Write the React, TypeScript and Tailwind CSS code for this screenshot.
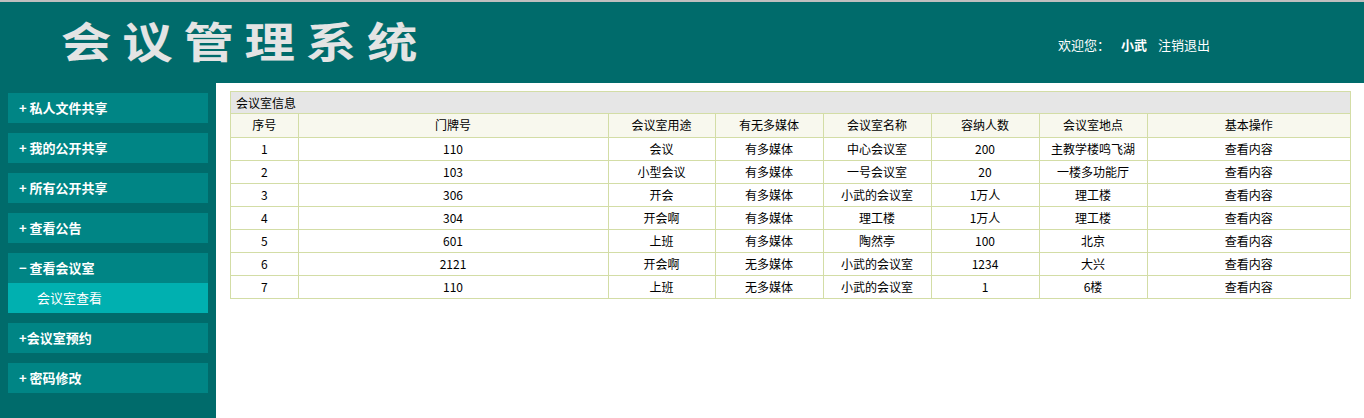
import React from "react";

const menu = [
  { label: "+ 私人文件共享" },
  { label: "+ 我的公开共享" },
  { label: "+ 所有公开共享" },
  { label: "+ 查看公告" },
  { label: "− 查看会议室", children: ["会议室查看"] },
  { label: "+会议室预约" },
  { label: "+ 密码修改" },
];

const cols = [
  { title: "序号", w: "w-[67px]" },
  { title: "门牌号", w: "w-[310px]" },
  { title: "会议室用途", w: "w-[107px]" },
  { title: "有无多媒体", w: "w-[108px]" },
  { title: "会议室名称", w: "w-[108px]" },
  { title: "容纳人数", w: "w-[108px]" },
  { title: "会议室地点", w: "w-[108px]" },
  { title: "基本操作", w: "" },
];

const rooms = [
  ["1", "110", "会议", "有多媒体", "中心会议室", "200", "主教学楼鸣飞湖"],
  ["2", "103", "小型会议", "有多媒体", "一号会议室", "20", "一楼多功能厅"],
  ["3", "306", "开会", "有多媒体", "小武的会议室", "1万人", "理工楼"],
  ["4", "304", "开会啊", "有多媒体", "理工楼", "1万人", "理工楼"],
  ["5", "601", "上班", "有多媒体", "陶然亭", "100", "北京"],
  ["6", "2121", "开会啊", "无多媒体", "小武的会议室", "1234", "大兴"],
  ["7", "110", "上班", "无多媒体", "小武的会议室", "1", "6楼"],
];

const font = "font-['Microsoft_YaHei','Noto_Sans_CJK_SC',sans-serif]";

export default function App() {
  return (
    <div className={`h-[418px] w-[1364px] overflow-hidden bg-white ${font}`}>
      <div className="h-[2px] bg-[#bfbfbf]" />
      {/* 顶栏 */}
      <div className="flex h-[81px] items-center bg-[#006b6b]">
        <h1 className="mb-[6px] ml-[61px] origin-left scale-x-[1.2] text-[42px] font-semibold leading-none tracking-[9px] text-[#e4e4e4]">
          会议管理系统
        </h1>
        <div className="ml-auto mr-[154px] mt-[4px] flex gap-[11px] text-[13px] text-white">
          <span>欢迎您：</span>
          <span className="font-bold">小武</span>
          <span>注销退出</span>
        </div>
      </div>

      <div className="flex h-[335px]">
        {/* 左侧菜单 */}
        <div className="flex w-[216px] flex-col gap-[10px] bg-[#006b6b] px-[8px] pt-[10px]">
          {menu.map((m) => (
            <div key={m.label}>
              <div className="flex h-[30px] items-center bg-[#008585] pl-[11px] text-[13px] font-bold text-white">
                {m.label}
              </div>
              {m.children?.map((c) => (
                <div
                  key={c}
                  className="flex h-[30px] items-center bg-[#00b0b0] pl-[29px] text-[13px] text-white"
                >
                  {c}
                </div>
              ))}
            </div>
          ))}
        </div>

        {/* 内容区 */}
        <div className="flex-1 pl-[14px] pr-[13px] pt-[8px]">
          <div className="border border-[#d3dda6]">
            <div className="flex h-[22px] items-center border-b border-[#d3dda6] bg-[#e6e6e6] pl-[5px] text-[12px] text-black">
              会议室信息
            </div>
            <table className="w-full border-collapse text-[12px] text-black">
              <thead>
                <tr className="h-[23px] bg-[#f8f8ee]">
                  {cols.map((c, i) => (
                    <th
                      key={c.title}
                      className={`${c.w} border-[#d3dda6] p-0 text-center font-normal ${
                        i > 0 ? "border-l" : ""
                      }`}
                    >
                      {c.title}
                    </th>
                  ))}
                </tr>
              </thead>
              <tbody>
                {rooms.map((r) => (
                  <tr key={r[0]} className="h-[23px] border-t border-[#d3dda6]">
                    {r.map((v, i) => (
                      <td
                        key={i}
                        className={`border-[#d3dda6] p-0 text-center ${i > 0 ? "border-l" : ""}`}
                      >
                        {v}
                      </td>
                    ))}
                    <td className="border-l border-[#d3dda6] p-0 text-center">查看内容</td>
                  </tr>
                ))}
              </tbody>
            </table>
          </div>
        </div>
      </div>
    </div>
  );
}
